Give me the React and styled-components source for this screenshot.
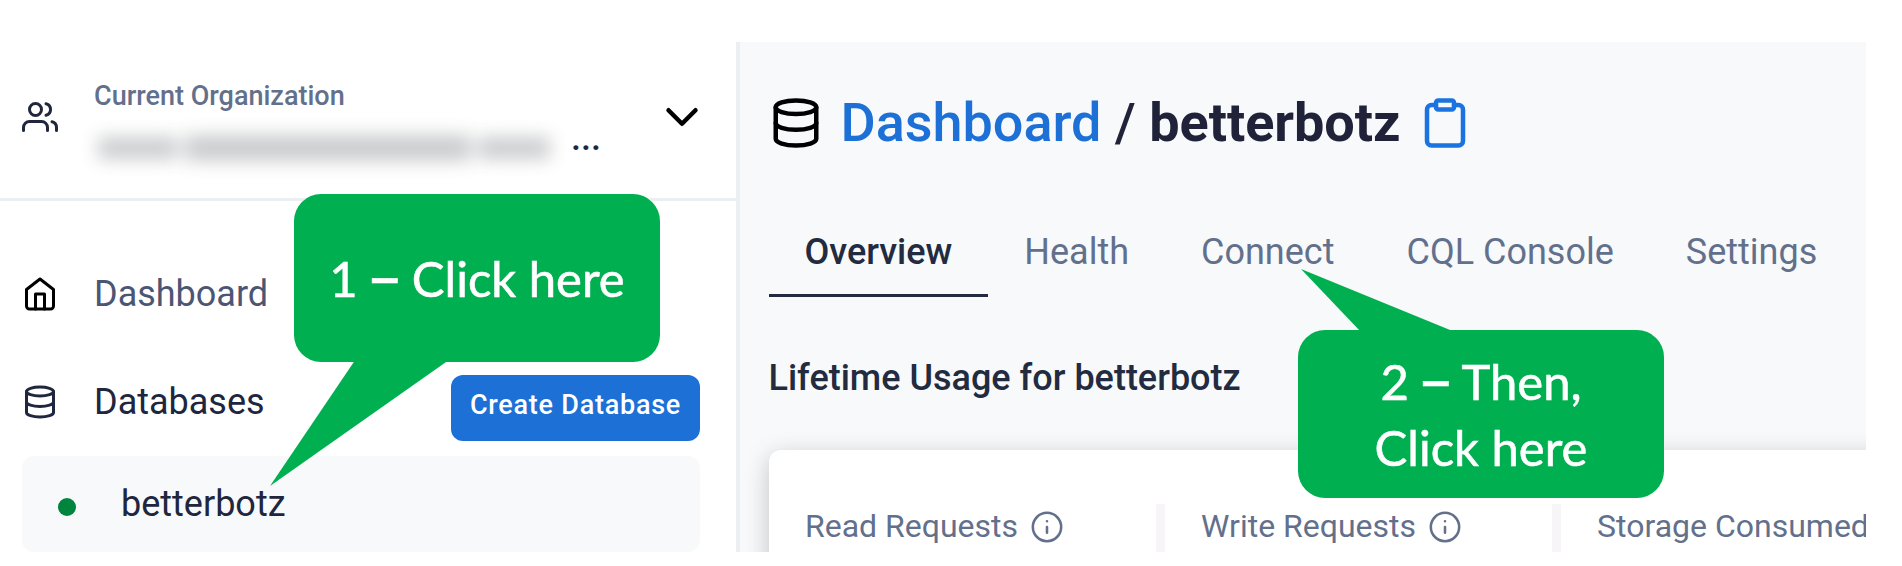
import React from "react";
import styled, { createGlobalStyle } from "styled-components";

const GlobalStyle = createGlobalStyle`
  * { box-sizing: border-box; }
  body { margin: 0; background: #fff; font-family: Roboto, "Liberation Sans", sans-serif; overflow: hidden; }
`;

const Page = styled.div`
  position: relative;
  width: 1902px;
  height: 566px;
  padding: 42px 36px 14px 0;
  overflow: hidden;
`;

const Window = styled.div`
  display: flex;
  height: 510px;
  overflow: hidden;
`;

const Sidebar = styled.aside`
  flex: none;
  width: 740px;
  border-right: 4px solid #ebeff2;
  background: #fff;
`;

const Organization = styled.div`
  display: flex;
  align-items: center;
  gap: 36px;
  height: 159px;
  padding: 0 27.5px 6px 22px;
  border-bottom: 3px solid #ebeff2;
`;

const OrganizationText = styled.div`
  flex: 1;
  display: flex;
  flex-direction: column;
  gap: 18px;
  margin-top: 11px;
`;

const OrganizationLabel = styled.div`
  font-size: 27px;
  line-height: 32px;
  font-weight: 500;
  color: #63708c;
`;

const OrganizationName = styled.div`
  display: flex;
  align-items: center;
  height: 36px;
`;

const Redacted = styled.div`
  display: flex;
  align-items: center;
  width: 477px;
  padding-left: 4px;
  gap: 7px;
  filter: blur(9px);
  opacity: 0.25;
`;

const Smear = styled.span`
  width: ${(p) => p.$width}px;
  height: ${(p) => p.$height || 26}px;
  border-radius: 4px;
  background: #30343c;
`;

const Ellipsis = styled.span`
  padding-bottom: 20px;
  font-size: 36px;
  line-height: 16px;
  font-weight: 500;
  color: #20263d;
`;

const Nav = styled.nav`
  display: flex;
  flex-direction: column;
  padding: 63px 36px 0 22px;
`;

const NavItem = styled.div`
  display: flex;
  align-items: center;
  gap: 36px;
  height: 60px;
  margin-bottom: ${(p) => p.$after}px;
  font-size: 36px;
  line-height: 42px;
  color: ${(p) => (p.$active ? "#20263d" : "#4b5675")};
`;

const CreateButton = styled.button`
  align-self: flex-start;
  width: 249px;
  height: 66px;
  margin: 3px 0 -9px auto;
  padding: 0 0 6px;
  border: 0;
  border-radius: 12px;
  background: #1d70d6;
  color: #fff;
  font: 500 27px/32px Roboto, sans-serif;
  letter-spacing: 0.75px;
  white-space: nowrap;
`;

const DatabaseItem = styled.div`
  display: flex;
  align-items: center;
  gap: 45px;
  height: 96px;
  padding-left: 36px;
  border-radius: 12px;
  background: #f7f9fb;
  font-size: 36px;
  line-height: 42px;
  color: #20263d;
`;

const StatusDot = styled.span`
  width: 18px;
  height: 18px;
  margin-top: 6px;
  border-radius: 50%;
  background: #00853f;
`;

const Main = styled.main`
  flex: 1;
  min-width: 0;
  padding-left: 28.5px;
  overflow: hidden;
  background: #f7f9fb;
`;

const TitleRow = styled.header`
  display: flex;
  align-items: center;
  gap: 18px;
  height: 161px;
`;

const Title = styled.h1`
  margin: 0;
  font-size: 54px;
  line-height: 64px;
  font-weight: 500;
  letter-spacing: -0.04px;
  color: #1f2238;
`;

const Crumb = styled.span`
  color: #1d70d6;
`;

const Tabs = styled.div`
  display: flex;
  margin-top: 7px;
`;

const Tab = styled.div`
  display: flex;
  align-items: center;
  height: 87px;
  padding: 0 36px;
  border-bottom: 3px solid ${(p) => (p.$active ? "#222b40" : "transparent")};
  font-size: 36px;
  line-height: 42px;
  font-weight: ${(p) => (p.$active ? 500 : 400)};
  color: ${(p) => (p.$active ? "#222b40" : "#63708c")};
  white-space: nowrap;
`;

const SectionTitle = styled.h2`
  margin: 60px 0 51px;
  font-size: 36px;
  line-height: 42px;
  font-weight: 500;
  color: #222b40;
`;

const Card = styled.section`
  display: flex;
  width: 1400px;
  height: 180px;
  padding-top: 54px;
  border-radius: 12px;
  background: #fff;
  box-shadow: 0 6px 25px rgba(0, 0, 0, 0.22);
`;

const Metric = styled.div`
  flex: none;
  display: flex;
  align-items: flex-start;
  gap: 12px;
  width: 396px;
  padding-left: 36.5px;
  border-right: 9px solid #f7f5f7;
  font-size: 32px;
  line-height: 44px;
  color: #63708c;
  white-space: nowrap;

  svg { flex: none; margin-top: 5.5px; }
`;

const Callout = styled.div`
  position: absolute;
  left: ${(p) => p.$left}px;
  top: ${(p) => p.$top}px;
  display: flex;
  align-items: center;
  justify-content: center;
  width: 366px;
  height: 168px;
  border-radius: 27px;
  background: #00b050;
  color: #fff;
  font: 400 49px/66px Lato, sans-serif;
  -webkit-text-stroke: 0.6px #fff;
  text-align: center;
`;

const Dash = styled.span`
  margin: 0 -0.5px;
  font-family: "Noto Sans", sans-serif;
  font-size: 60px;
  line-height: 0;
`;

const Tail = styled.svg`
  position: absolute;
  left: ${(p) => p.$left}px;
  top: ${(p) => p.$top}px;
  fill: #00b050;
`;

function Icon({ size = 36, color = "#20263d", stroke = 2, children }) {
  return (
    <svg width={size} height={size} viewBox="0 0 24 24" fill="none" stroke={color}
      strokeWidth={stroke} strokeLinecap="round" strokeLinejoin="round">
      {children}
    </svg>
  );
}

const DatabaseIcon = (props) => (
  <Icon {...props}>
    <ellipse cx="12" cy="5" rx="9" ry="3" />
    <path d="M21 12c0 1.66-4 3-9 3s-9-1.34-9-3" />
    <path d="M3 5v14c0 1.66 4 3 9 3s9-1.34 9-3V5" />
  </Icon>
);

const UsersIcon = () => (
  <Icon>
    <path d="M17 21v-2a4 4 0 0 0-4-4H5a4 4 0 0 0-4 4v2" />
    <circle cx="9" cy="7" r="4" />
    <path d="M23 21v-2a4 4 0 0 0-3-3.87" />
    <path d="M16 3.13a4 4 0 0 1 0 7.75" />
  </Icon>
);

const HomeIcon = () => (
  <Icon color="#000">
    <path d="M3 9l9-7 9 7v11a2 2 0 0 1-2 2H5a2 2 0 0 1-2-2z" />
    <path d="M9 22V12h6v10" />
  </Icon>
);

const ChevronIcon = () => (
  <Icon size={54} color="#000"><path d="M6 9l6 6 6-6" /></Icon>
);

const ClipboardIcon = () => (
  <Icon size={54} color="#1a73e0">
    <path d="M16 4h2a2 2 0 0 1 2 2v14a2 2 0 0 1-2 2H6a2 2 0 0 1-2-2V6a2 2 0 0 1 2-2h2" />
    <rect x="8" y="2" width="8" height="4" rx="1" />
  </Icon>
);

const InfoIcon = () => (
  <Icon size={34} color="#63708c" stroke={1.8}>
    <circle cx="12" cy="12" r="10" />
    <path d="M12 16v-4M12 8h.01" />
  </Icon>
);

export default function App() {
  return (
    <Page>
      <GlobalStyle />
      <Window>
        <Sidebar>
          <Organization>
            <UsersIcon />
            <OrganizationText>
              <OrganizationLabel>Current Organization</OrganizationLabel>
              <OrganizationName>
                <Redacted>
                  <Smear $width={80} $height={22} />
                  <Smear $width={286} />
                  <Smear $width={72} $height={22} />
                </Redacted>
                <Ellipsis>...</Ellipsis>
              </OrganizationName>
            </OrganizationText>
            <ChevronIcon />
          </Organization>
          <Nav>
            <NavItem $after={48}><HomeIcon />Dashboard</NavItem>
            <NavItem $active $after={24}>
              <DatabaseIcon />Databases
              <CreateButton>Create Database</CreateButton>
            </NavItem>
            <DatabaseItem><StatusDot />betterbotz</DatabaseItem>
          </Nav>
        </Sidebar>
        <Main>
          <TitleRow>
            <DatabaseIcon size={54} color="#000" />
            <Title><Crumb>Dashboard</Crumb> / <b>betterbotz</b></Title>
            <ClipboardIcon />
          </TitleRow>
          <Tabs>
            <Tab $active>Overview</Tab>
            <Tab>Health</Tab>
            <Tab>Connect</Tab>
            <Tab>CQL Console</Tab>
            <Tab>Settings</Tab>
          </Tabs>
          <SectionTitle>Lifetime Usage for betterbotz</SectionTitle>
          <Card>
            <Metric>Read Requests<InfoIcon /></Metric>
            <Metric>Write Requests<InfoIcon /></Metric>
            <Metric>Storage Consumed</Metric>
          </Card>
        </Main>
      </Window>
      <Tail $left={270} $top={361} width="178" height="125"><path d="M84.5 0H177.500L0 125Z" /></Tail>
      <Callout $left={294} $top={194}><span>1 <Dash>–</Dash> Click here</span></Callout>
      <Tail $left={1301} $top={269} width="152" height="62"><path d="M0 0L59 62H151.500Z" /></Tail>
      <Callout $left={1298} $top={330}><span>2 <Dash>–</Dash> Then,<br />Click here</span></Callout>
    </Page>
  );
}
